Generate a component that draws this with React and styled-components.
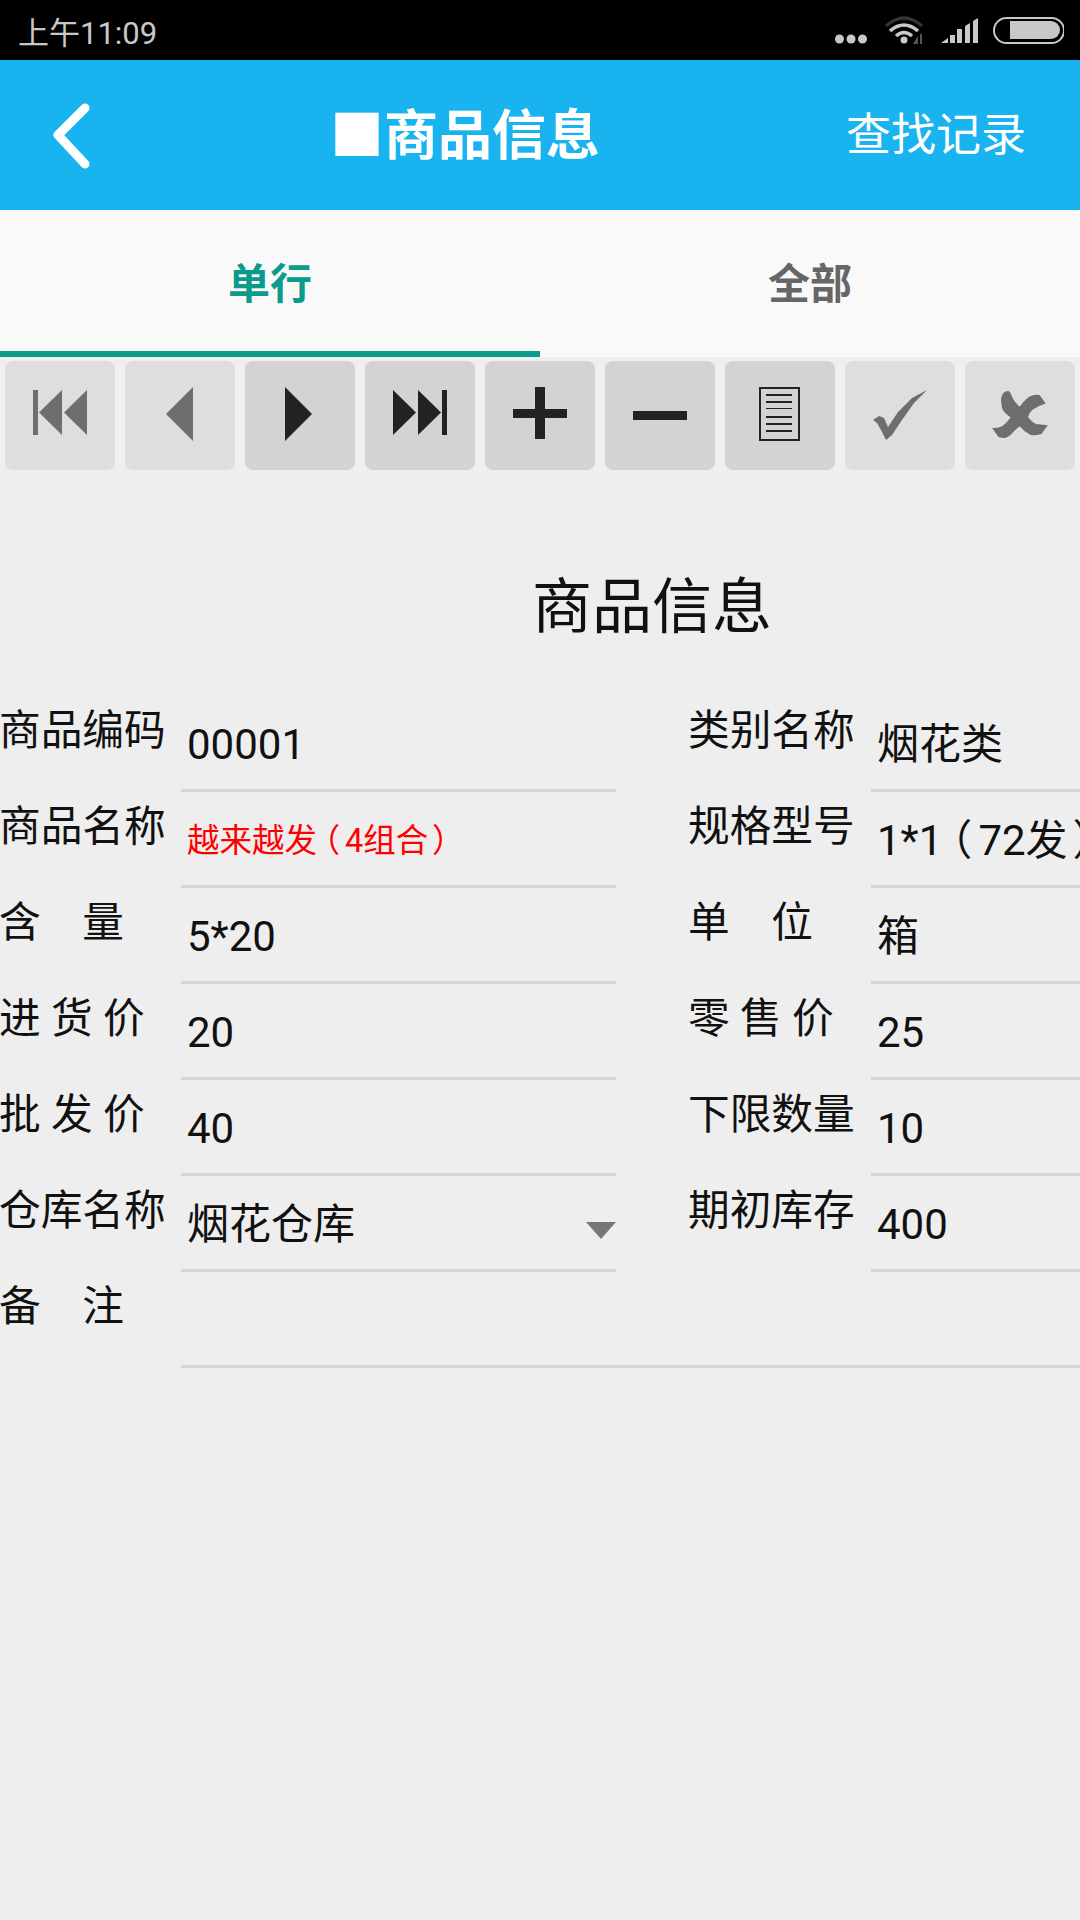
import React from 'react';
import styled, { createGlobalStyle } from 'styled-components';

const Global = createGlobalStyle`
  html, body { margin: 0; padding: 0; background: #eeeeee; }
  #root { width: 1080px; height: 1920px; overflow: hidden; }
  * { box-sizing: border-box; }
`;
const Page = styled.div`
  width: 1080px; height: 1920px; display: flex; flex-direction: column; background: #eeeeee; overflow: hidden;
  font-family: Roboto, "Noto Sans CJK SC", sans-serif; color: #111;
`;
const StatusBar = styled.div`
  height: 60px; background: #000; display: flex; align-items: center; justify-content: space-between;
  padding: 0 16px 0 18px; color: #c8c8c8; font-size: 31px;
`;
const StatusIcons = styled.svg`width: 229px; height: 60px; display: block;`;
const Header = styled.header`
  height: 150px; background: #19b4ef; color: #fff; display: grid; grid-template-columns: 335px 1fr auto;
  align-items: center; padding-right: 54px;
`;
const BackIcon = styled.svg`width: 40px; height: 68px; margin-left: 52px; display: block;`;
const HeaderTitle = styled.div`font-size: 54px; font-weight: 700; line-height: 1; white-space: nowrap; margin-left: -5px; padding-top: 4px;`;
const HeaderAction = styled.div`font-size: 45px; line-height: 1;`;
const Tabs = styled.div`height: 147px; background: #f9f9f9; display: flex;`;
const Tab = styled.div`
  flex: 1; display: flex; align-items: center; justify-content: center; font-size: 42px; font-weight: 700;
  color: ${p => (p.$active ? '#0a9b8b' : '#666')};
  border-bottom: 6px solid ${p => (p.$active ? '#0a9b8b' : 'transparent')};
`;
const Toolbar = styled.div`display: flex; gap: 10px; padding: 4px 5px 0; background: #efefef;`;
const ToolButton = styled.div`
  width: 110px; height: 109px; border-radius: 8px; flex: none; overflow: hidden;
  background: ${p => (p.$on ? '#d3d3d3' : '#dedede')};
  color: ${p => (p.$on ? '#222' : '#6e6e6e')};
`;
const ToolIcon = styled.svg`width: 110px; height: 110px; display: block;`;
const Heading = styled.h1`
  margin: 0; padding: 103px 0 0 532px; font-size: 60px; font-weight: 400; line-height: 70px; height: 173px; white-space: nowrap; color: #111;
`;
const Form = styled.div`
  display: grid; grid-template-columns: 181px 435px 73px 182px 209px; grid-auto-rows: 96px; margin-top: 53px;
`;
const Label = styled.div`
  font-size: 41.7px; line-height: 50px; padding-top: 10px; margin-left: -1px; white-space: pre; color: #111;
`;
const Field = styled.div`
  position: relative; overflow: hidden; white-space: nowrap; border-bottom: 3px solid #d6d6d6; padding: 24px 0 0 6px;
  font-size: ${p => (p.$small ? '32.5px' : '42px')}; line-height: 50px;
  color: ${p => (p.$red ? '#ff0000' : '#111')};
  grid-column: ${p => (p.$wide ? '2 / -1' : 'auto')};
`;
const Gap = styled.div``;
const Caret = styled.span`
  position: absolute; right: 0; bottom: 30px; width: 0; height: 0;
  border-left: 15px solid transparent; border-right: 15px solid transparent; border-top: 17px solid #777;
`;
const Paren = styled.span`
  display: inline-block; text-align: center; font-feature-settings: "palt";
  width: ${p => (p.$close ? '0.8em' : '0.86em')};
`;

const tri = (x1, x2, y1, y2, left) => left
  ? `${x2},${y1} ${x2},${y2} ${x1},${(y1 + y2) / 2}`
  : `${x1},${y1} ${x1},${y2} ${x2},${(y1 + y2) / 2}`;

const tools = [
  { on: false, icon: <><rect x="28" y="29" width="5" height="45" /><polygon points={tri(34, 57, 29, 74, true)} /><polygon points={tri(59, 82, 29, 74, true)} /></> },
  { on: false, icon: <polygon points={tri(41, 68, 26, 80, true)} /> },
  { on: true, icon: <polygon points={tri(40, 67, 26, 80, false)} /> },
  { on: true, icon: <><polygon points={tri(28, 51, 29, 74, false)} /><polygon points={tri(53, 76, 29, 74, false)} /><rect x="77" y="29" width="5" height="45" /></> },
  { on: true, icon: <><rect x="28" y="48" width="54" height="9" /><rect x="50" y="26" width="10" height="52" /></> },
  { on: true, icon: <rect x="28" y="50" width="54" height="9" /> },
  { on: true, icon: <><rect x="35" y="27" width="39" height="52" fill="none" stroke="currentColor" strokeWidth="2" />{[34, 41, 48, 56, 63, 70].map(y => <rect key={y} x="41" y={y - 1} width="26" height={y === 48 ? 1 : 2} />)}</> },
  { on: false, icon: <polygon points="28,59 34,55 39,57 43,66 53,51 67,37 82,29 69,42 57,59 47,74 41,79 36,69 32,62" /> },
  { on: false, icon: <path stroke="currentColor" strokeWidth="2" d="M37 38 Q38 31 43 31 Q45 32 46 36 Q49 43 55 47 Q59 41 64 37 Q70 34 74 35 L79 42 Q72 44 67 48 Q63 51 62 56 Q66 62 71 64 L81 65 L76 72 Q70 74 66 73 Q60 70 55 64 Q51 66 48 70 Q44 75 40 76 Q36 76 34 75 L29 68 Q34 68 38 66 Q43 62 47 56 Q40 52 38 47 Q37 42 37 38 Z" /> },
];

const rows = [
  ['商品编码', <>00001</>, '类别名称', <>烟花类</>],
  ['商品名称', <>越来越发<Paren>（</Paren>4组合<Paren $close>）</Paren></>, '规格型号', <>1*1<Paren>（</Paren>72发<Paren $close>）</Paren></>, true],
  ['含　量', <>5*20</>, '单　位', <>箱</>],
  ['进 货 价', <>20</>, '零 售 价', <>25</>],
  ['批 发 价', <>40</>, '下限数量', <>10</>],
  ['仓库名称', <>烟花仓库<Caret /></>, '期初库存', <>400</>],
];

export default function App() {
  return (
    <Page>
      <Global />
      <StatusBar>
        <span>上午11:09</span>
        <StatusIcons viewBox="835 0 229 60">
          <g fill="#c8c8c8">
            <circle cx="839.5" cy="39" r="4.5" /><circle cx="851" cy="39" r="4.5" /><circle cx="862.5" cy="39" r="4.5" />
            <circle cx="904" cy="40" r="3.5" />
          </g>
          <g fill="none" strokeLinecap="butt">
            <path d="M886 26 Q904 10 922 26" stroke="#333" strokeWidth="3.5" />
            <path d="M890 31 Q904 19 918 31" stroke="#c8c8c8" strokeWidth="3.5" />
            <path d="M896 36 Q904 29 912 36" stroke="#c8c8c8" strokeWidth="3.5" />
          </g>
          <path d="M913 44 L918 36 V44 Z M920 34 H922 V44 H920 Z" fill="#555" />
          <g fill="#c8c8c8">
            <polygon points="941,43 948,38 948,43" />
            <rect x="950" y="35" width="5" height="8" /><rect x="957" y="29" width="5" height="14" />
            <polygon points="965,26 970,23 970,43 965,43" /><polygon points="973,21 978,18 978,43 973,43" />
          </g>
          <rect x="994" y="18" width="70" height="25" rx="12.5" fill="none" stroke="#c8c8c8" strokeWidth="2" />
          <path d="M1010 21 H1051 a9 9 0 0 1 9 9 a9 9 0 0 1 -9 9 H1010 Z" fill="#c8c8c8" />
        </StatusIcons>
      </StatusBar>
      <Header>
        <BackIcon viewBox="0 0 40 68">
          <path d="M33 7 L6 34 L33 63" fill="none" stroke="#fff" strokeWidth="9" strokeLinecap="round" strokeLinejoin="round" />
        </BackIcon>
        <HeaderTitle>■商品信息</HeaderTitle>
        <HeaderAction>查找记录</HeaderAction>
      </Header>
      <Tabs>
        <Tab $active>单行</Tab>
        <Tab>全部</Tab>
      </Tabs>
      <Toolbar>
        {tools.map((tool, i) => (
          <ToolButton key={i} $on={tool.on}>
            <ToolIcon viewBox="0 0 110 110" fill="currentColor">{tool.icon}</ToolIcon>
          </ToolButton>
        ))}
      </Toolbar>
      <Heading>商品信息</Heading>
      <Form>
        {rows.map(([a, av, b, bv, red]) => (
          <React.Fragment key={a}>
            <Label>{a}</Label>
            <Field $small={red} $red={red}>{av}</Field>
            <Gap />
            <Label>{b}</Label>
            <Field>{bv}</Field>
          </React.Fragment>
        ))}
        <Label>备　注</Label>
        <Field $wide />
      </Form>
    </Page>
  );
}
